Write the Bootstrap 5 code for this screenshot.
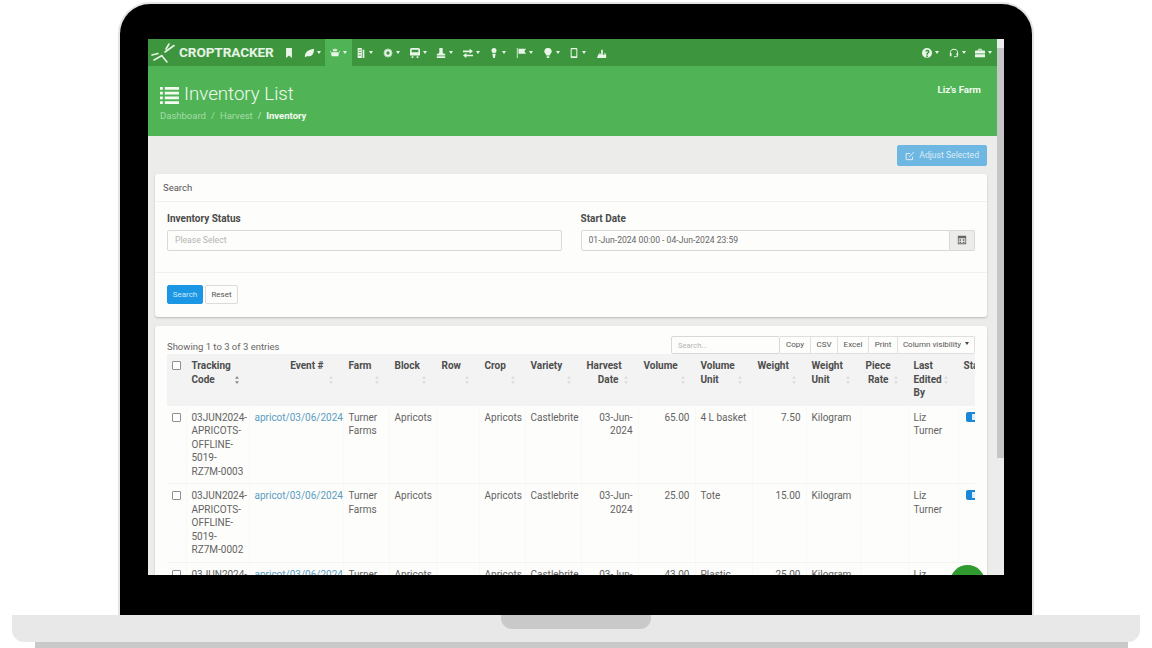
<!DOCTYPE html>
<html lang="en">
<head>
  <meta charset="UTF-8">
  <title>Croptracker | Inventory List</title>
  <meta name="viewport" content="width=device-width, initial-scale=1">
  <link href="https://cdn.jsdelivr.net/npm/bootstrap@5.3.0/dist/css/bootstrap.min.css" rel="stylesheet">
  <style>
    html, body { height: 648px; overflow: hidden; background: #fff; }
    body { font-family: Roboto, "Liberation Sans", sans-serif; font-size: 10px; line-height: 13.5px; color: #636363; padding-top: 2px; }

    /* laptop frame */
    .lid { width: 916px; margin-left: 118px; background: #000; border: 2px solid #e4e4e4; border-bottom: 0; border-radius: 32px 32px 0 0; padding: 35px 28px 40px; }
    .screen { width: 856px; height: 536px; overflow: hidden; position: relative; background: #ecedeb; }
    .page-col { width: 849px; }
    .base { width: 1128px; height: 27px; margin-left: 12px; background: #e8e8e8; border-radius: 0 0 12px 12px; }
    .notch { width: 150px; height: 14px; background: #c9c9c9; border-radius: 0 0 11px 11px; }
    .foot { width: 1093px; height: 6px; margin-left: 35px; background: #c9c9c9; }

    /* scrollbar strip */
    .sbar { width: 7px; background: #ececec; }
    .sbar-thumb { height: 410px; margin-top: 9px; background: #c6c6c6; }

    /* top nav */
    .topnav { height: 27px; background: #3d963d; }
    .brand { width: 131px; padding-left: 2px; color: #e6f3e6; font-weight: 700; font-size: 13.6px; letter-spacing: -.1px; gap: 3px; }
    .nav-ico { width: 26.6px; height: 27px; color: #e9f5e9; text-decoration: none; }
    .nav-ico.on { background: #50b456; }
    .nav-ico.w-first { width: 20px; }
    .nav-ico.w-leaf { width: 26px; }
    .nav-ico.w-chart { width: 22px; }
    .nav-ico svg { width: 10px; height: 10px; fill: currentColor; }
    .nav-ico.dropdown-toggle::after { border-top-width: 3px; border-left-width: 2.5px; border-right-width: 2.5px; margin-left: 3px; }

    /* green header */
    .pagehead { height: 70px; background: #50b456; color: #f2faf2; padding: 15px 16px 0 12px; }
    .pagehead h1 { font-size: 18.7px; font-weight: 300; line-height: 26px; margin: 0; gap: 5px; }
    .pagehead h1 svg { width: 19px; height: 19px; fill: #f2faf2; }
    .crumbs { font-size: 9.5px; margin: 2px 0 0; color: #a5dba8; --bs-breadcrumb-divider-color: #a5dba8; --bs-breadcrumb-item-padding-x: 5px; }
    .crumbs .active { color: #f2faf2; font-weight: 700; }
    .farmname { font-weight: 700; font-size: 9.7px; padding-top: 2px; }

    /* content */
    .inner { padding: 9px 10px 0 7px; }
    .adjust { font-size: 8.6px; line-height: 13px; height: 21px; padding: 3px 7px; background: #6eb7e2; border: 1px solid #6eb7e2; border-radius: 2px; color: #dcecf6; gap: 4px; margin-bottom: 8px; }
    .adjust svg { width: 10px; height: 10px; }
    .panel { background: #fdfdfb; border: 0; border-radius: 3px; box-shadow: 0 1px 2px rgba(0,0,0,.22); --bs-card-bg: #fdfdfb; }
    .panel .card-header { height: 28px; padding: 7px 8px; background: none; border-bottom: 1px solid #f1f1ef; font-size: 9.5px; color: #555; }
    .panel .form-body { height: 70px; padding: 10px 12px 0; gap: 19px; }
    .panel .form-body > div { flex: 0 0 394.5px; }
    .flabel { font-weight: 700; font-size: 10px; color: #4a4a4a; margin-bottom: 4px; display: block; }
    .panel .form-control { height: 21px; min-height: 0; font-size: 8.6px; padding: 2px 7px; border: 1px solid #d8d8d6; border-radius: 2px; background-color: #fdfdfb; color: #666; }
    .panel .form-control::placeholder { color: #b5b5b5; }
    .calbtn { width: 25px; background: #ececea; border: 1px solid #d8d8d6; border-left: 0; border-radius: 0 2px 2px 0; }
    .calbtn svg { width: 10px; height: 10px; fill: #666; }
    .panel .card-footer { height: 45px; padding: 12px 12px 0; background: none; border-top: 1px solid #f1f1ef; gap: 2px; }
    .minibtn { font-size: 8px; line-height: 11px; padding: 3px 6px; border-radius: 2px; border: 1px solid #dcdcda; background: #fdfdfb; color: #555; height: 19px; }
    .minibtn.go { background: #1a96e4; border-color: #1a96e4; color: #cde8fa; width: 36px; }
    .minibtn.rs { width: 33px; }

    .listcard { margin-top: 9px; padding: 10px 12px 0; height: 260px; }
    .tools { height: 18px; }
    .tools .showing { font-size: 9.5px; padding-top: 4px; color: #666; }
    .tools .form-control { width: 109px; height: 18px; font-size: 7.6px; padding: 1px 6px; }
    .toolbtn { font-size: 8px; line-height: 12px; height: 18px; padding: 2px 0; border: 1px solid #dfdfdd; border-left: 0; background: #fdfdfb; color: #555; border-radius: 0; text-align: center; }
    .toolbtn.last { border-radius: 0 2px 2px 0; }
    .toolbtn.dropdown-toggle::after { border-top-width: 3px; border-left-width: 2.5px; border-right-width: 2.5px; margin-left: 4px; color: #444; }

    .tablewrap { overflow: hidden; width: 808px; overflow-wrap: normal; word-wrap: normal; }
    .invtable { table-layout: fixed; width: 863px; margin: 0; font-size: 10px; line-height: 13.5px; --bs-table-bg: transparent; --bs-table-color: #636363; border-collapse: collapse; }
    .invtable th, .invtable td { padding: 5px; vertical-align: top; border: 0; border-left: 1px solid #f8f8f6; border-bottom: 1px solid #f3f3f1; }
    .invtable tr > :first-child { border-left: 0; }
    .invtable thead th { position: relative; background: #f2f3f2; height: 51px; color: #4d4d4d; font-weight: 700; padding-right: 19px; border-left-color: #f2f3f2; }
    .invtable th.rgt { text-align: right; }
    .invtable td.rgt { text-align: right; }
    .invtable th.nosort { padding-right: 5px; }
    .invtable a { color: #5a9cbf; text-decoration: none; }
    .sortmark { position: absolute; right: 10px; top: 22px; width: 4px; height: 8px; fill: #dcdcdc; }
    .sortmark.cur { fill: #8b8b8b; }
    .invtable .form-check-input { width: 9px; height: 9px; margin: 2px 0 0; border: 1px solid #8f8f8f; border-radius: 1px; background-color: #fff; display: block; }
    .statebtn { display: block; width: 22px; height: 10px; margin: 1px 0 0 2px; background: #1a86d8; border-radius: 2px 0 0 2px; padding-top: 2px; }
    .statebtn i { display: block; width: 3px; height: 6px; margin-left: 6px; background: #dbeefb; }

    /* chat bubble sits on top of the table */
    .chatbubble { position: absolute; left: 802px; top: 526px; width: 35px; height: 35px; border-radius: 50%; background: #2f9a2f; }
  </style>
</head>

<body>
<div class="lid">
  <div class="screen d-flex">
    <div class="page-col">

      <!-- TOP NAV -->
      <nav class="topnav d-flex align-items-center">
        <div class="brand d-flex align-items-center">
          <svg width="26" height="22" viewBox="0 0 24 22" fill="none" stroke="#e6f3e6" stroke-width="1.6" stroke-linecap="round">
            <path d="M1 13 7 11.5M3 18 11 13.5M11 14 16 20M14 10 23 3.5M15 7 18 2"/>
          </svg>
          <span>CROPTRACKER</span>
        </div>
        <div class="d-flex flex-grow-1 align-items-center" id="nav-left"></div>
        <div class="d-flex align-items-center" id="nav-right"></div>
      </nav>

      <!-- PAGE HEADER -->
      <header class="pagehead d-flex justify-content-between">
        <div>
          <h1 class="d-flex align-items-center">
            <svg viewBox="0 0 20 20"><path d="M0 2h3v3H0zM5 2h15v3H5zM0 7h3v3H0zM5 7h15v3H5zM0 12h3v3H0zM5 12h15v3H5zM0 17h3v3H0zM5 17h15v3H5z"/></svg>
            Inventory List
          </h1>
          <ol class="breadcrumb crumbs">
            <li class="breadcrumb-item">Dashboard</li>
            <li class="breadcrumb-item">Harvest</li>
            <li class="breadcrumb-item active">Inventory</li>
          </ol>
        </div>
        <div class="farmname">Liz's Farm</div>
      </header>

      <div class="inner">
        <div class="d-flex justify-content-end">
          <button class="btn adjust d-flex align-items-center" type="button">
            <svg viewBox="0 0 12 12" fill="none" stroke="#dcecf6" stroke-width="1.2"><path d="M9 7v3.4H1.4V3H6M5 7.2 10.6 1.4"/></svg>
            Adjust Selected
          </button>
        </div>

        <!-- SEARCH CARD -->
        <div class="card panel">
          <div class="card-header">Search</div>
          <div class="form-body d-flex">
            <div>
              <label class="flabel">Inventory Status</label>
              <input type="text" class="form-control" placeholder="Please Select">
            </div>
            <div>
              <label class="flabel">Start Date</label>
              <div class="d-flex">
                <input type="text" class="form-control rounded-end-0" value="01-Jun-2024 00:00 - 04-Jun-2024 23:59">
                <span class="calbtn d-flex flex-shrink-0 align-items-center justify-content-center">
                  <svg viewBox="0 0 12 12"><path d="M1 1h10v10H1zM2 4v6h8V4zM3 5h2v2H3zM7 5h2v2H7zM3 8h2v1.500H3zM7 8h2v1.500H7z" fill-rule="evenodd"/></svg>
                </span>
              </div>
            </div>
          </div>
          <div class="card-footer d-flex align-items-start">
            <button class="btn minibtn go p-0" type="button">Search</button>
            <button class="btn minibtn rs p-0" type="button">Reset</button>
          </div>
        </div>

        <!-- TABLE CARD -->
        <div class="card panel listcard">
          <div class="tools d-flex justify-content-between">
            <div class="showing">Showing 1 to 3 of 3 entries</div>
            <div class="d-flex">
              <input type="text" class="form-control" placeholder="Search...">
              <button class="btn toolbtn" style="width:31px" type="button">Copy</button>
              <button class="btn toolbtn" style="width:27px" type="button">CSV</button>
              <button class="btn toolbtn" style="width:31px" type="button">Excel</button>
              <button class="btn toolbtn" style="width:29px" type="button">Print</button>
              <button class="btn toolbtn last dropdown-toggle" style="width:77px" type="button">Column visibility</button>
            </div>
          </div>
          <div class="tablewrap">
            <table class="table invtable">
              <colgroup id="cols"></colgroup>
              <thead><tr id="head"></tr></thead>
              <tbody id="rows"></tbody>
            </table>
          </div>
        </div>
      </div>
    </div>

    <div class="sbar"><div class="sbar-thumb"></div></div>
    <div class="chatbubble"></div>
  </div>
</div>

<div class="base d-flex justify-content-center"><div class="notch"></div></div>
<div class="foot"></div>

<script src="https://cdn.jsdelivr.net/npm/bootstrap@5.3.0/dist/js/bootstrap.bundle.min.js"></script>
<script>
  // nav icons, 12x12 viewBox
  const icons = {
    bookmark: "M2.500 0h7v12L6 9l-3.500 3z",
    leaf: "M1 11C1 5 5 2 12 1c0 7-3 9-6.500 9-1.500 0-2.500-.5-3 .5z",
    basket: "M6 0l1 2 2-1-1 3h3L10 10H2L1 4h3L3 1l2 1zM0 4h12v1H0z",
    ledger: "M2 0h5v12H2zM8 2h2v10H8zM3 2v1h3V2zM3 5v1h3V5zM3 8v1h3V8z",
    gear: "M6 0l1 2 2-1 0 2 2 0-1 2 2 1-2 1 1 2-2 0 0 2-2-1-1 2-1-2-2 1 0-2-2 0 1-2-2-1 2-1-1-2 2 0 0-2 2 1zM6 4a2 2 0 100 4 2 2 0 000-4z",
    bus: "M2 0h8c1 0 2 1 2 2v7H0V2c0-1 1-2 2-2zM2 2v3h8V2zM2 10h2v2H2zM8 10h2v2H8z",
    stamp: "M4 0h4v5l1 2h2v2H1V7h2l1-2zM1 10h10v2H1z",
    swap: "M0 3h8V1l4 3-4 3V5H0zM12 8H4V6L0 9l4 3v-2h8z",
    person: "M6 0a3 3 0 110 6 3 3 0 010-6zM4 7h4l-1 5H5z",
    flag: "M1 0h1v12H1zM3 1h9l-2 3 2 3H3z",
    bulb: "M6 0a4 4 0 013 7L8 9H4L3 7a4 4 0 013-7zM4.500 10h3v2h-3z",
    mobile: "M3 0h6c.5 0 1 .5 1 1v10c0 .5-.5 1-1 1H3c-.5 0-1-.5-1-1V1c0-.5.5-1 1-1zM3.200 1.500v8.500h5.600V1.500z",
    chart: "M0 12l2-5 1 1V5l2 3V2l2 0v6h2V5l2 3v4z",
    help: "M6 0a6 6 0 110 12A6 6 0 016 0zM5 9v2h2V9zM4 4.500h1.500c0-1.500 1.500-1 1.500 0C7 5.500 5 6 5 8h2c0-1.500 2-2 2-3.700C9 1.500 4 1.500 4 4.500z",
    headset: "M6 1a5 5 0 015 5v3c0 1.500-1.500 2-3 2H6v-1h2c1 0 2-.3 2-1H9V6h1a4 4 0 00-8 0h1v4H1V6a5 5 0 015-5z",
    case: "M4 1h4v2h3c.5 0 1 .5 1 1v7H0V4c0-.5.5-1 1-1h3zM5 2v1h2V2zM0 6.500h12v1H0z"
  };

  function navIcon(name, caret, extra) {
    return `<a href="#" class="nav-ico d-flex align-items-center justify-content-center${caret ? " dropdown-toggle" : ""}${extra ? " " + extra : ""}">
      <svg viewBox="0 0 12 12"><path fill-rule="evenodd" d="${icons[name]}"/></svg></a>`;
  }

  document.getElementById("nav-left").innerHTML =
    navIcon("bookmark", false, "w-first") + navIcon("leaf", true, "w-leaf") + navIcon("basket", true, "on") +
    ["ledger","gear","bus","stamp","swap","person","flag","bulb","mobile"].map(n => navIcon(n, true)).join("") +
    navIcon("chart", false, "w-chart");
  document.getElementById("nav-right").innerHTML =
    navIcon("help", true) + navIcon("headset", true) + navIcon("case", true);

  // table columns: width, title, right aligned
  const columns = [
    [19, ""], [63, "Tracking Code"], [94, "Event #", 1], [46, "Farm"], [47, "Block"], [43, "Row"],
    [46, "Crop"], [56, "Variety"], [57, "Harvest Date", 1], [57, "Volume", 1], [57, "Volume Unit"],
    [54, "Weight", 1], [54, "Weight Unit"], [48, "Piece Rate", 1], [50, "Last Edited By"], [72, "Status"]
  ];
  const sortSvg = cur => `<svg class="sortmark${cur ? " cur" : ""}" viewBox="0 0 5 10"><path d="M2.500 0 5 3.500H0zM2.500 10 5 6.500H0z"/></svg>`;

  document.getElementById("cols").innerHTML = columns.map(c => `<col style="width:${c[0]}px">`).join("");
  document.getElementById("head").innerHTML = columns.map((c, i) => {
    if (i === 0) return `<th class="nosort"><input class="form-check-input" type="checkbox"></th>`;
    if (i === 15) return `<th class="nosort">${c[1]}</th>`;
    return `<th class="${c[2] ? "rgt" : ""}">${c[1]}${sortSvg(i === 1)}</th>`;
  }).join("");

  const rowsData = [
    ["03JUN2024-APRICOTS-OFFLINE-5019-RZ7M-0003", "65.00", "4 L basket", "7.50"],
    ["03JUN2024-APRICOTS-OFFLINE-5019-RZ7M-0002", "25.00", "Tote", "15.00"],
    ["03JUN2024-APRICOTS-OFFLINE-5019-RZ7M-0001", "43.00", "Plastic Bin", "25.00"]
  ];

  document.getElementById("rows").innerHTML = rowsData.map(r => `
    <tr>
      <td><input class="form-check-input" type="checkbox"></td>
      <td>${r[0].replace(/-/g, "-<wbr>")}</td>
      <td><a href="#">apricot/03/06/2024</a></td>
      <td>Turner Farms</td>
      <td>Apricots</td>
      <td></td>
      <td>Apricots</td>
      <td>Castlebrite</td>
      <td class="rgt">03-Jun-2024</td>
      <td class="rgt">${r[1]}</td>
      <td>${r[2]}</td>
      <td class="rgt">${r[3]}</td>
      <td>Kilogram</td>
      <td></td>
      <td>Liz Turner</td>
      <td><span class="statebtn"><i></i></span></td>
    </tr>`).join("");
</script>
</body>
</html>
